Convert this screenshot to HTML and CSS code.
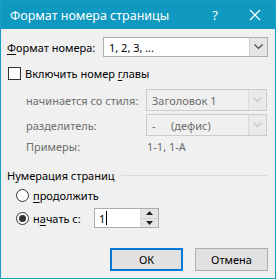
FILE: index.html
```html
<!DOCTYPE html>
<html lang="ru">
<head>
    <meta charset="utf-8">
    <title>Формат номера страницы</title>
    <link rel="stylesheet" href="styles.css">
</head>
<body>
<div class="window">
    <div class="titlebar">
        <span class="title">Формат номера страницы</span>
        <span class="help">?</span>
        <svg class="close" width="12" height="12" viewBox="0 0 12 12">
            <path d="M1 1 L11 11 M11 1 L1 11" stroke="#fff" stroke-width="1.2" fill="none"/>
        </svg>
    </div>
    <div class="content">
        <div class="row row-format">
            <span class="label-main"><u>Ф</u>ормат номера:</span>
            <div class="combo">
                <span class="combo-text">1, 2, 3, …</span>
                <span class="combo-btn">
                    <svg width="9" height="6" viewBox="0 0 9 6"><path d="M0.5 0.5 L4.5 4.5 L8.5 0.5" stroke="#444" stroke-width="1.2" fill="none"/></svg>
                </span>
            </div>
        </div>
        <div class="row row-check">
            <span class="checkbox"></span>
            <span>Включить номер <u>г</u>лавы</span>
        </div>
        <div class="row row-sub">
            <span class="label-sub">начинается со стиля:</span>
            <div class="combo disabled">
                <span class="combo-text">Заголовок 1</span>
                <span class="combo-btn">
                    <svg width="9" height="6" viewBox="0 0 9 6"><path d="M0.5 0.5 L4.5 4.5 L8.5 0.5" stroke="#c4c4c4" stroke-width="1.2" fill="none"/></svg>
                </span>
            </div>
        </div>
        <div class="row row-sub">
            <span class="label-sub">разделитель:</span>
            <div class="combo disabled">
                <span class="combo-text"><span class="dash">-</span>(дефис)</span>
                <span class="combo-btn">
                    <svg width="9" height="6" viewBox="0 0 9 6"><path d="M0.5 0.5 L4.5 4.5 L8.5 0.5" stroke="#c4c4c4" stroke-width="1.2" fill="none"/></svg>
                </span>
            </div>
        </div>
        <div class="row row-examples">
            <span class="label-sub">Примеры:</span>
            <span class="examples">1-1, 1-A</span>
        </div>
        <div class="row row-group">
            <span>Нумерация страниц</span>
            <span class="group-line"></span>
        </div>
        <div class="row row-radio">
            <span class="radio"></span>
            <span><u>п</u>родолжить</span>
        </div>
        <div class="row row-radio row-start">
            <span class="radio checked"></span>
            <span class="start-label">н<u>а</u>чать с:</span>
            <div class="spin">
                <span class="spin-text">1<span class="caret"></span></span>
                <span class="spin-btns">
                    <span class="spin-btn"><svg width="7" height="4" viewBox="0 0 7 4"><path d="M0 4 L3.5 0 L7 4 Z" fill="#222"/></svg></span>
                    <span class="spin-btn"><svg width="7" height="4" viewBox="0 0 7 4"><path d="M0 0 L3.5 4 L7 0 Z" fill="#222"/></svg></span>
                </span>
            </div>
        </div>
        <div class="row row-buttons">
            <span class="button default">ОК</span>
            <span class="button">Отмена</span>
        </div>
    </div>
</div>
</body>
</html>
```

FILE: styles.css
```css
body {
    margin: 0;
    font-family: "Noto Sans", "Open Sans", sans-serif;
    font-size: 11px;
    color: #000;
}
u {
    text-decoration: underline;
    text-underline-offset: 2px;
}
.window {
    width: 276px;
    height: 279px;
    box-sizing: border-box;
    border: 1px solid #1a9cc3;
    background: #f0f0f0;
    display: flex;
    flex-direction: column;
}
.titlebar {
    height: 28px;
    background: #0f99c0;
    color: #fff;
    display: flex;
    align-items: center;
    padding-left: 9px;
}
.title {
    font-size: 12.5px;
    flex: 1;
    white-space: nowrap;
}
.help {
    font-size: 13px;
    margin-right: 31px;
}
.close {
    margin-right: 14px;
}
.content {
    padding: 0 6px;
    display: flex;
    flex-direction: column;
}
.row {
    display: flex;
    align-items: center;
    white-space: nowrap;
}
.row > span {
    flex-shrink: 0;
}
.row-format {
    margin-top: 8px;
    height: 20px;
}
.label-main {
    width: 96px;
}
.combo {
    flex: 1;
    align-self: stretch;
    box-sizing: border-box;
    border: 1px solid #adadad;
    background: #fff;
    display: flex;
    align-items: center;
    margin-right: 1px;
}
.combo-text {
    flex: 1;
    padding-left: 5px;
}
.combo-btn {
    width: 17px;
    align-self: stretch;
    background: #e5e5e5;
    border-left: 1px solid #cfcfcf;
    display: flex;
    align-items: center;
    justify-content: center;
}
.combo.disabled {
    background: #f0f0f0;
    border-color: #cccccc;
    color: #6d6d6d;
    margin-right: 2px;
}
.combo.disabled .combo-btn {
    background: #eaeaea;
    border-left-color: #dadada;
}
.dash {
    display: inline-block;
    width: 19px;
}
.row-check {
    margin-top: 3px;
    height: 26px;
}
.checkbox {
    width: 13px;
    height: 13px;
    box-sizing: border-box;
    border: 1px solid #333;
    background: #fff;
    margin-left: 1px;
    margin-right: 4px;
}
.row-sub {
    margin-top: 3px;
    height: 22px;
}
.label-sub {
    color: #6d6d6d;
    padding-left: 19px;
    width: 120px;
}
.row-examples {
    height: 20px;
}
.examples {
    color: #6d6d6d;
    padding-left: 1px;
}
.row-group {
    margin-top: 9px;
    height: 20px;
}
.row-group > .group-line {
    flex: 1;
    height: 1px;
    background: #dcdcdc;
    margin-left: 6px;
    margin-right: 1px;
}
.row-radio {
    height: 20px;
    padding-left: 9px;
}
.radio {
    width: 13px;
    height: 13px;
    box-sizing: border-box;
    border: 1px solid #333;
    border-radius: 50%;
    background: #fff;
    margin-right: 4px;
    display: flex;
    align-items: center;
    justify-content: center;
}
.radio.checked::after {
    content: "";
    width: 7px;
    height: 7px;
    border-radius: 50%;
    background: #333;
}
.row-start {
    margin-top: 3px;
}
.start-label {
    width: 61px;
}
.spin {
    width: 65px;
    height: 20px;
    box-sizing: border-box;
    border: 1px solid #adadad;
    background: #fff;
    display: flex;
}
.spin-text {
    flex: 1;
    padding-left: 4px;
    display: flex;
    align-items: center;
}
.caret {
    width: 1px;
    height: 14px;
    background: #000;
    margin-left: 1px;
}
.spin-btns {
    width: 17px;
    display: flex;
    flex-direction: column;
    border-left: 1px solid #dcdcdc;
}
.spin-btn {
    flex: 1;
    background: #e5e5e5;
    display: flex;
    align-items: center;
    justify-content: center;
}
.spin-btn + .spin-btn {
    border-top: 1px solid #cfcfcf;
}
.row-buttons {
    margin-top: 20px;
    justify-content: flex-end;
    gap: 12px;
    margin-right: 1px;
}
.button {
    width: 73px;
    height: 23px;
    box-sizing: border-box;
    border: 1px solid #adadad;
    background: #e1e1e1;
    display: flex;
    align-items: center;
    justify-content: center;
}
.button.default {
    border: 2px solid #0078d7;
}
```
